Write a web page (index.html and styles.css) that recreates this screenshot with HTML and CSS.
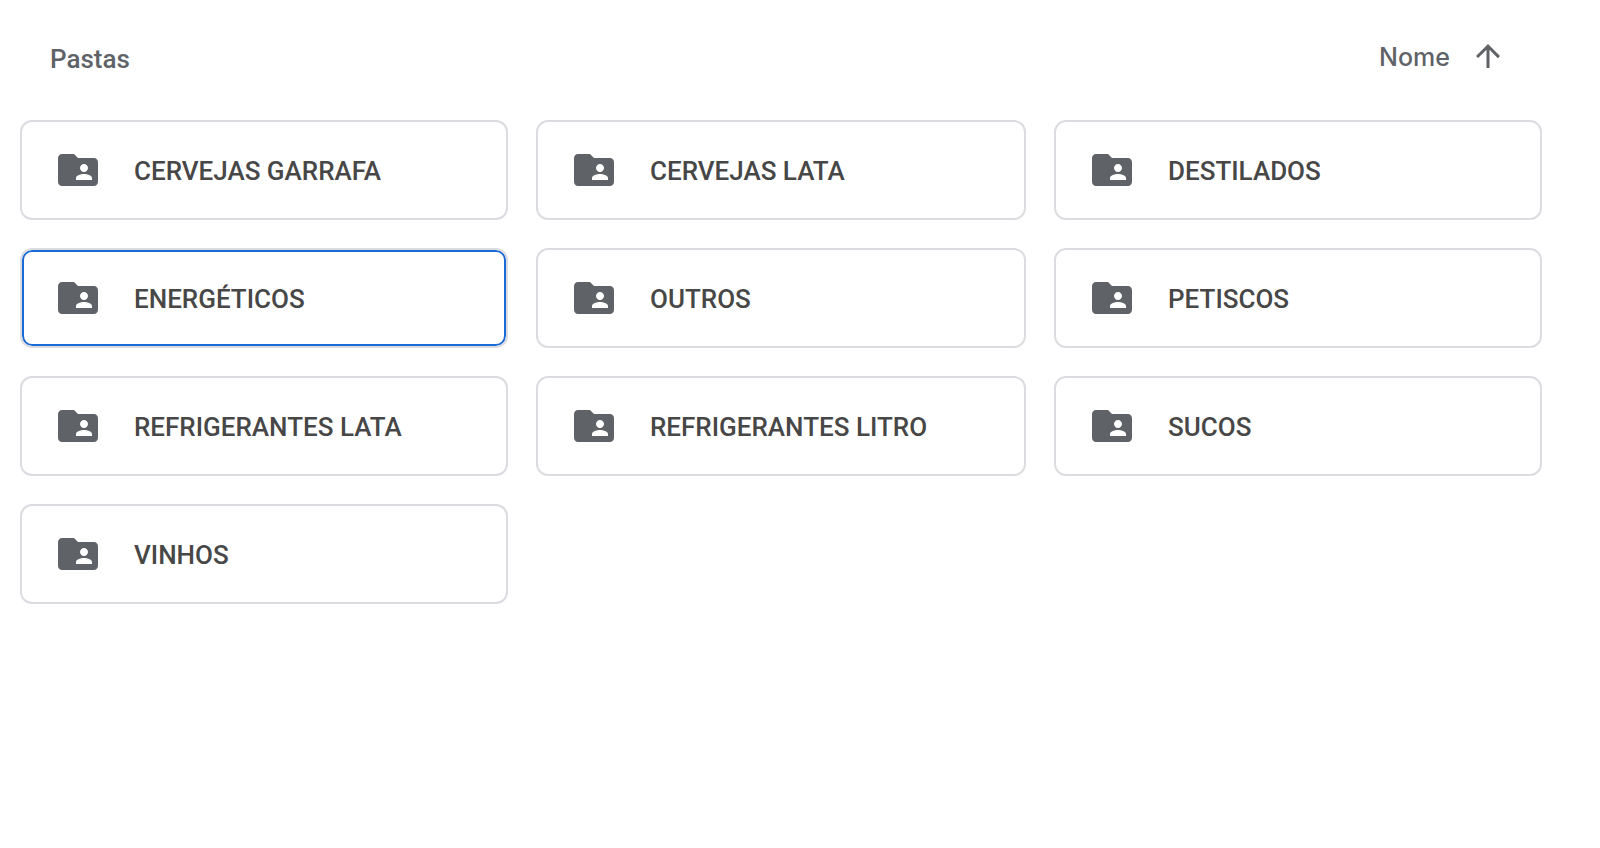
FILE: index.html
```html
<!DOCTYPE html>
<html lang="pt-BR">
<head>
  <meta charset="UTF-8" />
  <meta name="viewport" content="width=device-width, initial-scale=1.0"/>
  <title>Pastas</title>
  <link rel="stylesheet" href="styles.css">
</head>
<body>
  <!-- Shared folder icon, reused by every card -->
  <svg class="sprite" aria-hidden="true">
    <symbol id="folder-shared" viewBox="0 0 24 24">
      <path d="M20 6h-8l-2-2H4c-1.100 0-2 .9-2 2v12c0 1.100.9 2 2 2h16c1.100 0 2-.9 2-2V8c0-1.100-.9-2-2-2zm-5 3c1.100 0 2 .9 2 2s-.9 2-2 2-2-.9-2-2 .9-2 2-2zm4 8h-8v-1c0-1.330 2.670-2 4-2s4 .67 4 2v1z"/>
    </symbol>
  </svg>

  <main class="drive">
    <header class="header">
      <h1 class="title">Pastas</h1>
      <button class="sort" type="button">
        <span class="label">Nome</span>
        <svg class="arrow" viewBox="0 0 24 24" aria-hidden="true">
          <path d="M4 12l1.410 1.410L11 7.830V20h2V7.830l5.580 5.590L20 12l-8-8-8 8z"/>
        </svg>
      </button>
    </header>

    <div class="folders">
      <button class="folder" type="button"><svg class="icon"><use href="#folder-shared"/></svg><span class="label">CERVEJAS GARRAFA</span></button>
      <button class="folder" type="button"><svg class="icon"><use href="#folder-shared"/></svg><span class="label">CERVEJAS LATA</span></button>
      <button class="folder" type="button"><svg class="icon"><use href="#folder-shared"/></svg><span class="label">DESTILADOS</span></button>
      <button class="folder selected" type="button"><svg class="icon"><use href="#folder-shared"/></svg><span class="label">ENERGÉTICOS</span></button>
      <button class="folder" type="button"><svg class="icon"><use href="#folder-shared"/></svg><span class="label">OUTROS</span></button>
      <button class="folder" type="button"><svg class="icon"><use href="#folder-shared"/></svg><span class="label">PETISCOS</span></button>
      <button class="folder" type="button"><svg class="icon"><use href="#folder-shared"/></svg><span class="label">REFRIGERANTES LATA</span></button>
      <button class="folder" type="button"><svg class="icon"><use href="#folder-shared"/></svg><span class="label">REFRIGERANTES LITRO</span></button>
      <button class="folder" type="button"><svg class="icon"><use href="#folder-shared"/></svg><span class="label">SUCOS</span></button>
      <button class="folder" type="button"><svg class="icon"><use href="#folder-shared"/></svg><span class="label">VINHOS</span></button>
    </div>
  </main>
</body>
</html>
```

FILE: styles.css
```css
* {
  box-sizing: border-box;
}

body {
  margin: 0;
  background-color: #fff;
  font-family: Roboto, sans-serif;
  color: #5f6368;
}

button {
  border: none;
  background: none;
  cursor: pointer;
}

.sprite {
  display: none;
}

.drive {
  padding: 36px 58px 36px 20px;
}

.header {
  display: flex;
  justify-content: space-between;
  align-items: flex-start;
  height: 84px;
  padding: 0 36px 0 30px;
}

.title {
  margin: 0;
  font-size: 26px;
  line-height: 46px;
  font-weight: 500;
}

.sort {
  display: flex;
  align-items: center;
  gap: 20px;
  height: 40px;
  padding: 0;
  font-family: Inter, Roboto, sans-serif;
  font-size: 25px;
  line-height: 32px;
  font-weight: 500;
  color: #5f6368;
}

.label {
  padding-top: 2px;
}

.arrow {
  width: 36px;
  height: 36px;
  fill: #5f6368;
}

.folders {
  display: grid;
  grid-template-columns: 244fr 245fr 244fr;
  gap: 28px;
}

.folder {
  display: flex;
  align-items: center;
  gap: 32px;
  height: 100px;
  padding: 0 32px;
  border: 2px solid #dadce0;
  border-radius: 12px;
  font-family: Roboto, sans-serif;
  font-size: 26px;
  line-height: 32px;
  font-weight: 500;
  color: #474747;
}

/* blue ring drawn just inside the grey border */
.folder.selected {
  box-shadow: inset 0 0 0 2px #1a69d6;
}

.icon {
  flex: none;
  width: 48px;
  height: 48px;
  fill: #5f6368;
}
```
